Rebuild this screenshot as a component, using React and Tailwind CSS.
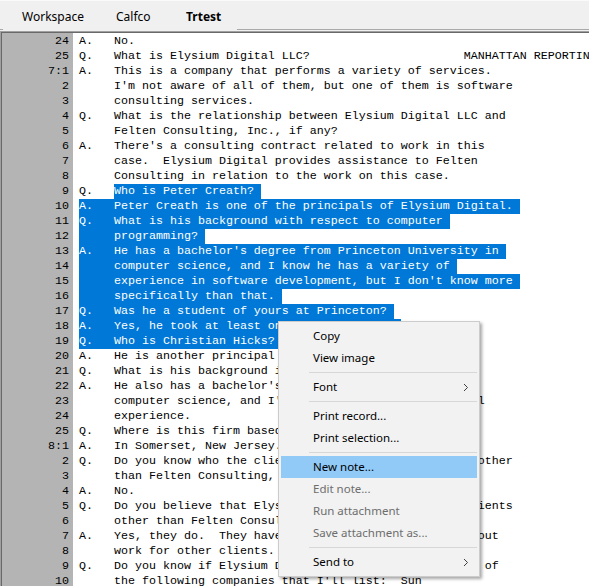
import React from "react";

const rows = [
  { n: "24", t: "A.   No." },
  { n: "25", t: "Q.   What is Elysium Digital LLC?" + " ".repeat(22) + "MANHATTAN REPORTING" },
  { n: "7:1", t: "A.   This is a company that performs a variety of services." },
  { n: "2", t: "     I'm not aware of all of them, but one of them is software" },
  { n: "3", t: "     consulting services." },
  { n: "4", t: "Q.   What is the relationship between Elysium Digital LLC and" },
  { n: "5", t: "     Felten Consulting, Inc., if any?" },
  { n: "6", t: "A.   There's a consulting contract related to work in this" },
  { n: "7", t: "     case.  Elysium Digital provides assistance to Felten" },
  { n: "8", t: "     Consulting in relation to the work on this case." },
  { n: "9", t: "Q.   Who is Peter Creath?", sel: "partial" },
  { n: "10", t: "A.   Peter Creath is one of the principals of Elysium Digital.", sel: "full" },
  { n: "11", t: "Q.   What is his background with respect to computer", sel: "full" },
  { n: "12", t: "     programming?", sel: "full" },
  { n: "13", t: "A.   He has a bachelor's degree from Princeton University in", sel: "full" },
  { n: "14", t: "     computer science, and I know he has a variety of", sel: "full" },
  { n: "15", t: "     experience in software development, but I don't know more", sel: "full" },
  { n: "16", t: "     specifically than that.", sel: "full" },
  { n: "17", t: "Q.   Was he a student of yours at Princeton?", sel: "full" },
  { n: "18", t: "A.   Yes, he took at least one class with me.", sel: "full" },
  { n: "19", t: "Q.   Who is Christian Hicks?", sel: "full" },
  { n: "20", t: "A.   He is another principal of Elysium Digital." },
  { n: "21", t: "Q.   What is his background in computer science?" },
  { n: "22", t: "A.   He also has a bachelor's degree in" },
  { n: "23", t: "     computer science, and I'm aware that he has practical" },
  { n: "24", t: "     experience." },
  { n: "25", t: "Q.   Where is this firm based?" },
  { n: "8:1", t: "A.   In Somerset, New Jersey." },
  { n: "2", t: "Q.   Do you know who the clients of Elysium Digital are, other" },
  { n: "3", t: "     than Felten Consulting, Inc.?" },
  { n: "4", t: "A.   No." },
  { n: "5", t: "Q.   Do you believe that Elysium Digital has any other clients" },
  { n: "6", t: "     other than Felten Consulting?" },
  { n: "7", t: "A.   Yes, they do.  They have advised me that they carry out" },
  { n: "8", t: "     work for other clients." },
  { n: "9", t: "Q.   Do you know if Elysium Digital has done work for any of" },
  { n: "10", t: "     the following companies that I'll list:  Sun" },
];

function Line({ r }) {
  if (r.sel === "full") {
    return (
      <div className="h-[15px] leading-[15px]">
        <span className="inline-block h-[15px] leading-[15px] bg-[#0078d7] text-white">{r.t + " "}</span>
      </div>
    );
  }
  if (r.sel === "partial") {
    return (
      <div className="h-[15px] leading-[15px]">
        <span>{r.t.slice(0, 5)}</span>
        <span className="inline-block h-[15px] leading-[15px] bg-[#0078d7] text-white">{r.t.slice(5) + " "}</span>
      </div>
    );
  }
  return <div className="h-[15px] leading-[15px]">{r.t}</div>;
}

function Chevron() {
  return (
    <svg width="6" height="9" viewBox="0 0 6 9" className="block">
      <polyline points="1,1 4.5,4.5 1,8" fill="none" stroke="#404040" strokeWidth="1" />
    </svg>
  );
}

function Item({ label, disabled, active, sub }) {
  return (
    <div
      className={
        "h-[22px] mx-[2px] pl-[32px] pr-[8px] flex items-center justify-between " +
        (active ? "bg-[#91c9f7] " : "") +
        (disabled ? "text-[#6d6d6d]" : "text-black")
      }
    >
      <span>{label}</span>
      {sub ? <Chevron /> : null}
    </div>
  );
}

function Sep() {
  return (
    <div className="h-[7px] ml-[30px] mr-[2px] py-[3px]">
      <div className="h-[1px] bg-[#d7d7d7]" />
    </div>
  );
}

export default function App() {
  return (
    <div className="relative w-[589px] h-[586px] overflow-hidden bg-[#f0f0f0] flex flex-col">
      {/* tab bar */}
      <div className="h-[29px] border-t border-[#fafafa] flex items-center pt-[3px] pl-[22px] font-['Segoe_UI','Noto_Sans',sans-serif] text-[12px] text-black">
        <div className="w-[94px]">Workspace</div>
        <div className="w-[70px]">Calfco</div>
        <div className="font-bold">Trtest</div>
      </div>
      <div className="h-[1px] flex">
        <div className="w-[3px] bg-[#a9a9a9]" />
        <div className="w-[234px]" />
        <div className="flex-1 bg-[#a9a9a9]" />
      </div>
      <div className="h-[1px]" />
      {/* document */}
      <div className="flex-1 min-h-0 border-t border-l border-[#a0a0a0]">
        <div className="h-full border-t border-l border-[#696969] flex font-['Courier_New','Liberation_Mono',monospace] text-[11.667px] text-black">
          <div className="w-[71px] shrink-0 bg-[#b4b4b4] pt-[1px] pr-[4px] text-right whitespace-pre">
            {rows.map((r, i) => (
              <div key={i} className="h-[15px] leading-[15px]">{r.n}</div>
            ))}
          </div>
          <div className="flex-1 min-w-0 bg-white pt-[1px] pl-[6px] whitespace-pre overflow-hidden">
            {rows.map((r, i) => (
              <Line key={i} r={r} />
            ))}
          </div>
        </div>
      </div>

      {/* context menu */}
      <div className="absolute left-[278px] top-[321px] w-[202px] bg-[#f2f2f2] border border-[#cccccc] py-[3px] shadow-[2px_2px_3px_rgba(0,0,0,0.35)] font-['Segoe_UI','Noto_Sans',sans-serif] text-[11.5px]">
        <Item label="Copy" />
        <Item label="View image" />
        <Sep />
        <Item label="Font" sub />
        <Sep />
        <Item label="Print record..." />
        <Item label="Print selection..." />
        <Sep />
        <Item label="New note..." active />
        <Item label="Edit note..." disabled />
        <Item label="Run attachment" disabled />
        <Item label="Save attachment as..." disabled />
        <Sep />
        <Item label="Send to" sub />
      </div>
    </div>
  );
}
